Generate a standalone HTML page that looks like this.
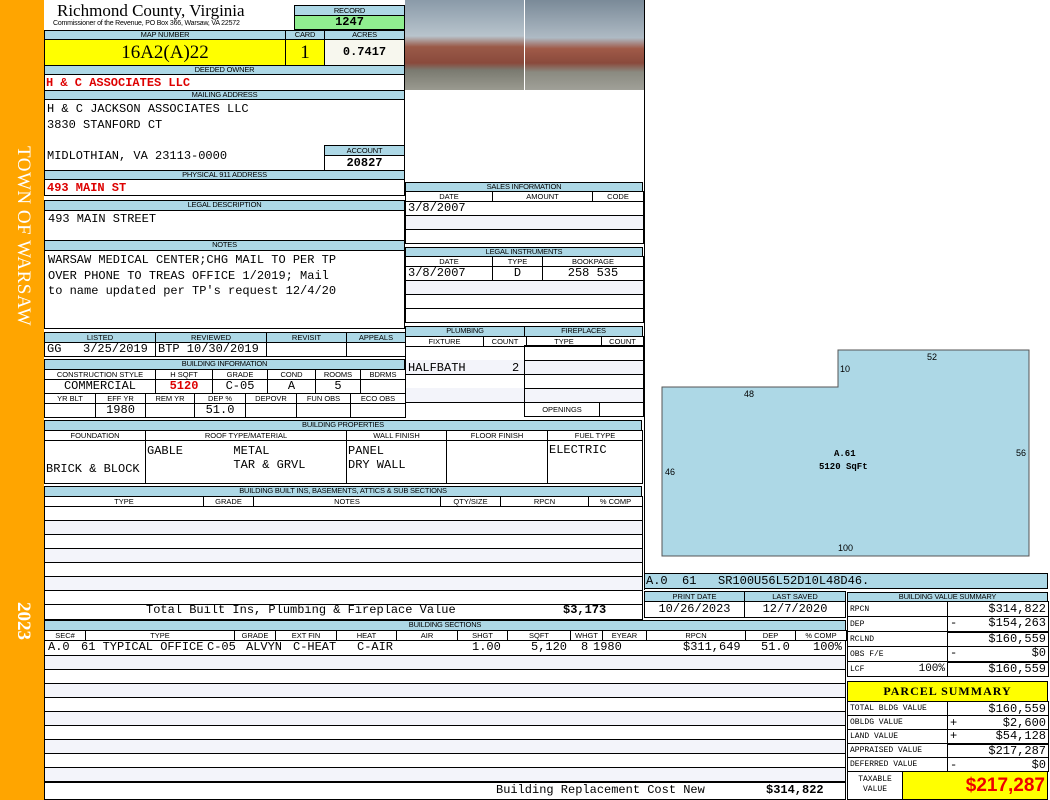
<!DOCTYPE html>
<html><head><meta charset="utf-8"><style>
*{margin:0;padding:0;box-sizing:border-box}
body{width:1050px;height:800px;background:#fff;position:relative;overflow:hidden;font-family:"Liberation Sans",sans-serif}
div,span.a{position:absolute}
.bx{border:1px solid #000;background:#fff}
.h{background:#add8e6;border:1px solid #000;font-size:7.5px;text-align:center;line-height:8px;color:#000;letter-spacing:-0.2px}
.m{font-family:"Liberation Mono",monospace;font-size:12px;line-height:13px;white-space:pre}
.r{color:#d00;font-weight:bold}
table{position:absolute;border-collapse:collapse;table-layout:fixed}
td{border:1px solid #000;font-family:"Liberation Mono",monospace;font-size:12px;line-height:13px;white-space:pre;overflow:hidden;padding:0 2px;height:14px}
td.l{font-family:"Liberation Sans",sans-serif;font-size:7.5px;text-align:center;height:10px;line-height:8px;padding:0}
tr.hb td{background:#add8e6}
.alt td{background:#f3f4fa}
.v td{height:15px;line-height:13px}
.v td:first-child{font-size:8px}
.v td:last-child{text-align:right;font-size:12px}
.p td{height:14px;line-height:12px}
.p td:first-child{font-size:8px}
.p td:last-child{text-align:right;font-size:12px}
.t{position:absolute;font-family:"Liberation Mono",monospace;font-size:12px;line-height:13px;white-space:pre}
</style></head><body>
<div style="left:0;top:0;width:44px;height:800px;background:#ffa500"></div>
<div style="left:12px;top:146px;writing-mode:vertical-rl;color:#fff;font-family:'Liberation Serif',serif;font-size:19px;letter-spacing:0.5px">TOWN OF WARSAW</div>
<div style="left:12px;top:602px;writing-mode:vertical-rl;color:#fff;font-family:'Liberation Serif',serif;font-size:19px;font-weight:bold">2023</div>

<div style="left:57px;top:2px;font-family:'Liberation Serif',serif;font-size:17px;line-height:18px">Richmond County, Virginia</div>
<div style="left:53px;top:20px;font-size:7px;letter-spacing:-0.2px">Commissioner of the Revenue, PO Box 366, Warsaw, VA 22572</div>
<div class="h" style="left:294px;top:5px;width:111px;height:11px;line-height:9px">RECORD</div>
<div style="left:294px;top:15px;width:111px;height:15px;background:#90ee90;border:1px solid #000;text-align:center;font-family:'Liberation Mono',monospace;font-weight:bold;font-size:12px;line-height:13px">1247</div>
<div class="h" style="left:44px;top:30px;width:242px;height:10px">MAP NUMBER</div>
<div class="h" style="left:285px;top:30px;width:40px;height:10px">CARD</div>
<div class="h" style="left:324px;top:30px;width:81px;height:10px">ACRES</div>
<div style="left:44px;top:39px;width:242px;height:27px;background:#ffff00;border:1px solid #000;text-align:center;font-family:'Liberation Serif',serif;font-size:19px;line-height:25px">16A2(A)22</div>
<div style="left:285px;top:39px;width:40px;height:27px;background:#ffff00;border:1px solid #000;text-align:center;font-family:'Liberation Serif',serif;font-size:19px;line-height:25px">1</div>
<div style="left:324px;top:39px;width:81px;height:27px;background:#f7f7ee;border:1px solid #000;text-align:center;font-family:'Liberation Mono',monospace;font-weight:bold;font-size:12px;line-height:25px">0.7417</div>
<div class="h" style="left:44px;top:65px;width:361px;height:10px">DEEDED OWNER</div>
<div class="bx m r" style="left:44px;top:74px;width:361px;height:17px;line-height:17px;padding-left:1px">H &amp; C ASSOCIATES LLC</div>
<div class="h" style="left:44px;top:90px;width:361px;height:10px">MAILING ADDRESS</div>
<div class="bx m" style="left:44px;top:99px;width:361px;height:72px;padding:2px 2px;line-height:15.5px">H &amp; C JACKSON ASSOCIATES LLC
3830 STANFORD CT

MIDLOTHIAN, VA 23113-0000</div>
<div class="h" style="left:324px;top:145px;width:81px;height:11px;line-height:9px">ACCOUNT</div>
<div class="bx" style="left:324px;top:155px;width:81px;height:16px;text-align:center;font-family:'Liberation Mono',monospace;font-weight:bold;font-size:12px;line-height:14px">20827</div>
<div class="h" style="left:44px;top:170px;width:361px;height:10px">PHYSICAL 911 ADDRESS</div>
<div class="bx m r" style="left:44px;top:179px;width:361px;height:17px;line-height:16px;padding-left:2px">493 MAIN ST</div>
<div class="h" style="left:44px;top:200px;width:361px;height:11px">LEGAL DESCRIPTION</div>
<div class="bx m" style="left:44px;top:210px;width:361px;height:31px;padding:2px 3px">493 MAIN STREET</div>
<div class="h" style="left:44px;top:240px;width:361px;height:11px">NOTES</div>
<div class="bx m" style="left:44px;top:250px;width:361px;height:79px;padding:2px 3px;line-height:15.5px">WARSAW MEDICAL CENTER;CHG MAIL TO PER TP
OVER PHONE TO TREAS OFFICE 1/2019; Mail
to name updated per TP's request 12/4/20</div>

<div style="left:405px;top:0;width:119px;height:90px;background:linear-gradient(#8a9aa8 0,#b8c4cc 40%,#9a5a48 52%,#8a4a3c 70%,#7a7a70 78%,#9a9a90 100%)"></div>
<div style="left:525px;top:0;width:119px;height:90px;background:linear-gradient(#7a8a98 0,#aebac4 42%,#a05a48 54%,#8a4a3c 70%,#8a8a80 80%,#a0a098 100%)"></div>
<div style="left:644px;top:0;width:1px;height:590px;background:#000"></div>

<table style="left:44px;top:332px;width:361px">
<colgroup><col style="width:111px"><col style="width:111px"><col style="width:80px"><col style="width:59px"></colgroup>
<tr class="hb"><td class="l">LISTED</td><td class="l">REVIEWED</td><td class="l">REVISIT</td><td class="l">APPEALS</td></tr>
<tr><td>GG   3/25/2019</td><td>BTP 10/30/2019</td><td></td><td></td></tr>
</table>
<div class="h" style="left:44px;top:359px;width:361px;height:11px">BUILDING INFORMATION</div>
<table style="left:44px;top:369px;width:361px">
<colgroup><col style="width:111px"><col style="width:57px"><col style="width:55px"><col style="width:48px"><col style="width:45px"><col style="width:45px"></colgroup>
<tr><td class="l">CONSTRUCTION STYLE</td><td class="l">H SQFT</td><td class="l">GRADE</td><td class="l">COND</td><td class="l">ROOMS</td><td class="l">BDRMS</td></tr>
<tr><td style="text-align:center">COMMERCIAL</td><td style="text-align:center;color:#d00;font-weight:bold">5120</td><td style="text-align:center">C-05</td><td style="text-align:center">A</td><td style="text-align:center">5</td><td></td></tr>
</table>
<table style="left:44px;top:393px;width:361px">
<colgroup><col style="width:51px"><col style="width:50px"><col style="width:49px"><col style="width:51px"><col style="width:51px"><col style="width:54px"><col style="width:55px"></colgroup>
<tr><td class="l">YR BLT</td><td class="l">EFF YR</td><td class="l">REM YR</td><td class="l">DEP %</td><td class="l">DEPOVR</td><td class="l">FUN OBS</td><td class="l">ECO OBS</td></tr>
<tr><td></td><td style="text-align:center">1980</td><td></td><td style="text-align:center">51.0</td><td></td><td></td><td></td></tr>
</table>

<div class="h" style="left:405px;top:182px;width:238px;height:10px">SALES INFORMATION</div>
<table style="left:405px;top:191px;width:238px">
<colgroup><col style="width:87px"><col style="width:100px"><col style="width:51px"></colgroup>
<tr><td class="l">DATE</td><td class="l">AMOUNT</td><td class="l">CODE</td></tr>
<tr><td colspan="3">3/8/2007</td></tr>
<tr class="alt"><td colspan="3"></td></tr>
<tr><td colspan="3"></td></tr>
</table>
<div class="h" style="left:405px;top:247px;width:238px;height:10px">LEGAL INSTRUMENTS</div>
<table style="left:405px;top:256px;width:238px">
<colgroup><col style="width:87px"><col style="width:50px"><col style="width:101px"></colgroup>
<tr><td class="l">DATE</td><td class="l">TYPE</td><td class="l">BOOKPAGE</td></tr>
<tr><td>3/8/2007</td><td style="text-align:center">D</td><td style="text-align:center">258 535</td></tr>
<tr class="alt"><td colspan="3"></td></tr>
<tr><td colspan="3"></td></tr>
<tr><td colspan="3"></td></tr>
</table>

<div class="h" style="left:405px;top:326px;width:120px;height:11px">PLUMBING</div>
<div class="h" style="left:524px;top:326px;width:119px;height:11px">FIREPLACES</div>
<div style="left:405px;top:346px;width:120px;height:57px;border:1px solid #000;border-top:none;background:linear-gradient(#fff 0,#fff 14px,#f3f4fa 14px,#f3f4fa 28px,#000 28px,#000 29px,#fff 29px,#fff 42px,#f3f4fa 42px)"></div>
<table style="left:405px;top:336px;width:238px">
<colgroup><col style="width:78px"><col style="width:43px"><col style="width:75px"><col style="width:42px"></colgroup>
<tr><td class="l">FIXTURE</td><td class="l">COUNT</td><td class="l">TYPE</td><td class="l">COUNT</td></tr>
</table>
<div class="t" style="left:408px;top:362px">HALFBATH</div>
<div class="t" style="left:512px;top:362px">2</div>
<table style="left:524px;top:345px;width:119px">
<colgroup><col style="width:75px"><col style="width:44px"></colgroup>
<tr><td colspan="2" style="height:15px"></td></tr>
<tr class="alt"><td colspan="2"></td></tr>
<tr><td colspan="2"></td></tr>
<tr class="alt"><td colspan="2"></td></tr>
<tr><td class="l" style="height:14px">OPENINGS</td><td></td></tr>
</table>

<div class="h" style="left:44px;top:420px;width:598px;height:11px">BUILDING PROPERTIES</div>
<table style="left:44px;top:430px;width:598px">
<colgroup><col style="width:101px"><col style="width:201px"><col style="width:100px"><col style="width:101px"><col style="width:95px"></colgroup>
<tr><td class="l">FOUNDATION</td><td class="l">ROOF TYPE/MATERIAL</td><td class="l">WALL FINISH</td><td class="l">FLOOR FINISH</td><td class="l">FUEL TYPE</td></tr>
<tr><td style="height:43px;padding:0 1px;line-height:14px"> 
BRICK &amp; BLOCK</td><td style="vertical-align:top;padding:3px 1px 0;line-height:14px">GABLE       METAL
            TAR &amp; GRVL</td><td style="vertical-align:top;padding:3px 1px 0;line-height:14px">PANEL
DRY WALL</td><td></td><td style="vertical-align:top;padding:3px 1px 0">ELECTRIC</td></tr>
</table>

<div class="h" style="left:44px;top:486px;width:598px;height:11px">BUILDING BUILT INS, BASEMENTS, ATTICS &amp; SUB SECTIONS</div>
<table style="left:44px;top:496px;width:598px">
<colgroup><col style="width:159px"><col style="width:50px"><col style="width:187px"><col style="width:60px"><col style="width:88px"><col style="width:54px"></colgroup>
<tr><td class="l">TYPE</td><td class="l">GRADE</td><td class="l">NOTES</td><td class="l">QTY/SIZE</td><td class="l">RPCN</td><td class="l">% COMP</td></tr>
<tr><td colspan="6"></td></tr>
<tr class="alt"><td colspan="6"></td></tr>
<tr><td colspan="6"></td></tr>
<tr class="alt"><td colspan="6"></td></tr>
<tr><td colspan="6"></td></tr>
<tr class="alt"><td colspan="6"></td></tr>
<tr><td colspan="6"></td></tr>
<tr><td colspan="6" style="height:15px"></td></tr>
</table>
<div class="t" style="left:146px;top:604px">Total Built Ins, Plumbing &amp; Fireplace Value</div>
<div class="t" style="left:563px;top:604px;font-weight:bold">$3,173</div>

<div class="h" style="left:44px;top:620px;width:802px;height:11px">BUILDING SECTIONS</div>
<div style="left:44px;top:640px;width:802px;height:160px;border:1px solid #000;border-top:none;background:linear-gradient(#fff 0,#fff 15px,#000 15px,#000 16px,transparent 16px)"></div>
<div style="left:44px;top:656px;width:802px;height:144px;border:1px solid #000;border-top:none;background:repeating-linear-gradient(#f3f4fa 0,#f3f4fa 13px,#000 13px,#000 14px,#fff 14px,#fff 27px,#000 27px,#000 28px)"></div>
<table style="left:44px;top:630px;width:802px">
<colgroup><col style="width:41px"><col style="width:149px"><col style="width:41px"><col style="width:61px"><col style="width:60px"><col style="width:61px"><col style="width:50px"><col style="width:63px"><col style="width:32px"><col style="width:44px"><col style="width:99px"><col style="width:50px"><col style="width:51px"></colgroup>
<tr><td class="l">SEC#</td><td class="l">TYPE</td><td class="l">GRADE</td><td class="l">EXT FIN</td><td class="l">HEAT</td><td class="l">AIR</td><td class="l">SHGT</td><td class="l">SQFT</td><td class="l">WHGT</td><td class="l">EYEAR</td><td class="l">RPCN</td><td class="l">DEP</td><td class="l">% COMP</td></tr>
</table>
<div class="t" style="left:48px;top:641px">A.0</div>
<div class="t" style="left:81px;top:641px">61 TYPICAL OFFICE</div>
<div class="t" style="left:207px;top:641px">C-05</div>
<div class="t" style="left:246px;top:641px">ALVYN</div>
<div class="t" style="left:293px;top:641px">C-HEAT</div>
<div class="t" style="left:357px;top:641px">C-AIR</div>
<div class="t" style="left:472px;top:641px">1.00</div>
<div class="t" style="left:531px;top:641px">5,120</div>
<div class="t" style="left:581px;top:641px">8</div>
<div class="t" style="left:593px;top:641px">1980</div>
<div class="t" style="left:683px;top:641px">$311,649</div>
<div class="t" style="left:761px;top:641px">51.0</div>
<div class="t" style="left:813px;top:641px">100%</div>
<div class="bx" style="left:44px;top:782px;width:802px;height:18px"></div>
<div class="t" style="left:496px;top:784px">Building Replacement Cost New</div>
<div class="t" style="left:766px;top:784px;font-weight:bold">$314,822</div>

<svg style="position:absolute;left:644px;top:0" width="406" height="590">
<polygon points="18,387 194,387 194,350 385,350 385,556 18,556" fill="#add8e6" stroke="#555" stroke-width="1"/>
<g font-family="Liberation Sans" font-size="9" fill="#000">
<text x="196" y="372">10</text><text x="283" y="360">52</text><text x="100" y="397">48</text>
<text x="21" y="475">46</text><text x="372" y="456">56</text><text x="194" y="551">100</text>
</g>
<g font-family="Liberation Mono" font-size="9" font-weight="bold" fill="#000">
<text x="190" y="456">A.61</text><text x="175" y="469">5120 SqFt</text></g>
</svg>
<div class="m" style="left:644px;top:573px;width:404px;height:16px;background:#add8e6;border:1px solid #000;line-height:14px;padding-left:1px">A.0  61   SR100U56L52D10L48D46.</div>

<table style="left:644px;top:591px;width:201px">
<colgroup><col style="width:100px"><col style="width:101px"></colgroup>
<tr class="hb"><td class="l">PRINT DATE</td><td class="l">LAST SAVED</td></tr>
<tr><td style="text-align:center;height:16px">10/26/2023</td><td style="text-align:center">12/7/2020</td></tr>
</table>

<div class="h" style="left:847px;top:592px;width:201px;height:10px">BUILDING VALUE SUMMARY</div>
<table class="v" style="left:847px;top:601px;width:201px">
<colgroup><col style="width:100px"><col style="width:101px"></colgroup>
<tr><td>RPCN</td><td>$314,822</td></tr>
<tr><td>DEP</td><td style="border-bottom:2px solid #000"><span style="float:left">-</span>$154,263</td></tr>
<tr><td>RCLND</td><td>$160,559</td></tr>
<tr><td>OBS F/E</td><td style="border-bottom:2px solid #000"><span style="float:left">-</span>$0</td></tr>
<tr><td>LCF<span style="float:right;font-size:11px">100%</span></td><td>$160,559</td></tr>
</table>

<div style="left:847px;top:681px;width:201px;height:21px;background:#ffff00;border:1px solid #000;text-align:center;font-family:'Liberation Serif',serif;font-weight:bold;font-size:12px;line-height:19px;letter-spacing:1px">PARCEL  SUMMARY</div>
<table class="p" style="left:847px;top:701px;width:201px">
<colgroup><col style="width:100px"><col style="width:101px"></colgroup>
<tr><td>TOTAL BLDG VALUE</td><td>$160,559</td></tr>
<tr><td>OBLDG VALUE</td><td><span style="float:left">+</span>$2,600</td></tr>
<tr><td>LAND VALUE</td><td style="border-bottom:2px solid #000"><span style="float:left">+</span>$54,128</td></tr>
<tr><td>APPRAISED VALUE</td><td>$217,287</td></tr>
<tr><td>DEFERRED VALUE</td><td><span style="float:left">-</span>$0</td></tr>
</table>
<div class="bx" style="left:847px;top:771px;width:56px;height:29px;font-family:'Liberation Mono',monospace;font-size:8px;line-height:10px;text-align:center;padding-top:3px">TAXABLE<br>VALUE</div>
<div style="left:902px;top:771px;width:146px;height:29px;background:#ffff00;border:1px solid #000;text-align:right;padding-right:2px;color:#e00;font-weight:bold;font-size:19px;line-height:27px">$217,287</div>
</body></html>
